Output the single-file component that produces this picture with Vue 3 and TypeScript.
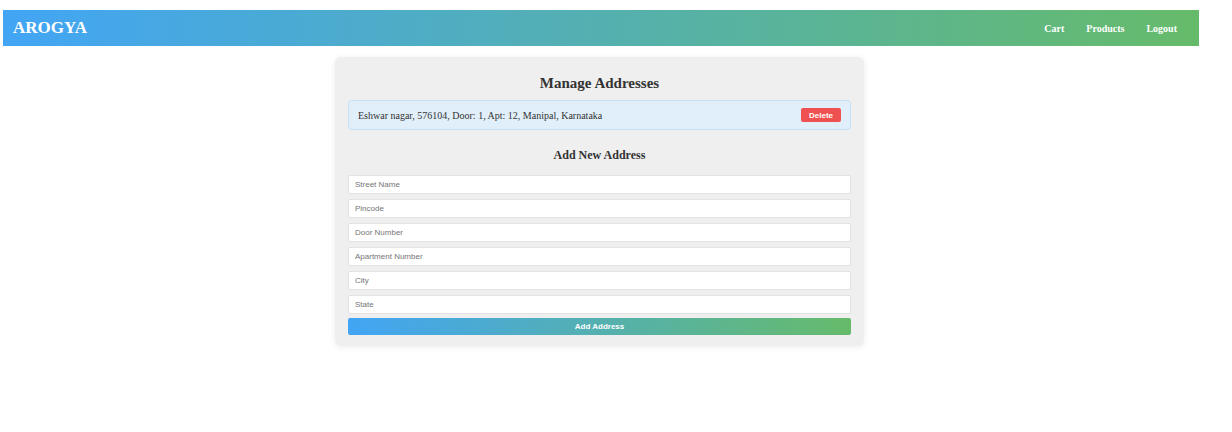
<script setup lang="ts">
import { reactive, ref } from 'vue'

interface Field {
  key: string
  label: string
}

const fields: Field[] = [
  { key: 'street', label: 'Street Name' },
  { key: 'pincode', label: 'Pincode' },
  { key: 'door', label: 'Door Number' },
  { key: 'apartment', label: 'Apartment Number' },
  { key: 'city', label: 'City' },
  { key: 'state', label: 'State' },
]

const links: string[] = ['Cart', 'Products', 'Logout']

const addresses = ref<string[]>([
  'Eshwar nagar, 576104, Door: 1, Apt: 12, Manipal, Karnataka',
])

const form = reactive<Record<string, string>>({
  street: '',
  pincode: '',
  door: '',
  apartment: '',
  city: '',
  state: '',
})

function removeAddress(index: number): void {
  addresses.value.splice(index, 1)
}

function addAddress(): void {
  if (!form.street) return
  addresses.value.push(
    `${form.street}, ${form.pincode}, Door: ${form.door}, Apt: ${form.apartment}, ${form.city}, ${form.state}`,
  )
  fields.forEach((field) => (form[field.key] = ''))
}
</script>

<template>
  <div class="page">
    <header class="navbar">
      <div class="brand">AROGYA</div>
      <nav class="links">
        <a v-for="link in links" :key="link" href="#">{{ link }}</a>
      </nav>
    </header>
    <main class="content">
      <section class="card">
        <h2>Manage Addresses</h2>
        <ul class="addresses">
          <li v-for="(address, index) in addresses" :key="address">
            <span>{{ address }}</span>
            <button type="button" class="delete" @click="removeAddress(index)">Delete</button>
          </li>
        </ul>
        <h3>Add New Address</h3>
        <form @submit.prevent="addAddress">
          <div class="fields">
            <input
              v-for="field in fields"
              :key="field.key"
              v-model="form[field.key]"
              type="text"
              :placeholder="field.label"
              :aria-label="field.label"
            />
          </div>
          <button type="submit" class="add">Add Address</button>
        </form>
      </section>
    </main>
  </div>
</template>

<style>
body {
  background: #fff;
}
</style>

<style scoped>
.page {
  padding: 10px 33px 40px 3px;
  font-family: 'Liberation Serif', 'Times New Roman', serif;
  color: #333;
}

.navbar {
  display: flex;
  align-items: center;
  justify-content: space-between;
  height: 36px;
  padding: 0 22px 0 10px;
  background: linear-gradient(90deg, #42a5f5, #66bb6a);
  color: #fff;
}

.brand {
  font-size: 17px;
  font-weight: bold;
}

.links {
  display: flex;
  gap: 22px;
}

.links a {
  color: #fff;
  font-size: 10px;
  font-weight: bold;
  text-decoration: none;
}

.content {
  padding: 11px 3px 0 0;
}

.card {
  box-sizing: border-box;
  max-width: 529px;
  margin: 0 auto;
  padding: 16px 13px 11px;
  border-radius: 6px;
  background: #efefef;
  box-shadow: 0 1px 6px rgba(0, 0, 0, 0.08);
}

h2 {
  margin: 0 0 7px;
  font-size: 15px;
  line-height: 20px;
  text-align: center;
}

.addresses {
  display: grid;
  gap: 6px;
  margin: 0;
  padding: 0;
  list-style: none;
}

.addresses li {
  box-sizing: border-box;
  display: flex;
  align-items: center;
  justify-content: space-between;
  min-height: 30px;
  padding: 0 9px;
  border: 1px solid #c5e1f7;
  border-radius: 4px;
  background: #e1effa;
  font-size: 10px;
}

button {
  border: 0;
  color: #fff;
  font-family: 'Liberation Sans', Arial, sans-serif;
  font-size: 8px;
  font-weight: bold;
  cursor: pointer;
}

.delete {
  width: 40px;
  height: 14px;
  padding: 0;
  border-radius: 2px;
  background: #ef5050;
}

h3 {
  margin: 17px 0 11px;
  font-size: 12px;
  line-height: 17px;
  text-align: center;
}

.fields {
  display: grid;
  gap: 5px;
}

input {
  box-sizing: border-box;
  width: 100%;
  height: 19px;
  padding: 0 6px;
  border: 1px solid #e2e2e2;
  border-radius: 2px;
  background: #fff;
  color: #333;
  font-family: 'Liberation Sans', Arial, sans-serif;
  font-size: 8px;
}

input::placeholder {
  color: #757575;
  opacity: 1;
}

.add {
  display: block;
  width: 100%;
  height: 17px;
  margin-top: 4px;
  padding: 0;
  border-radius: 2px;
  background: linear-gradient(90deg, #42a5f5, #66bb6a);
}
</style>
